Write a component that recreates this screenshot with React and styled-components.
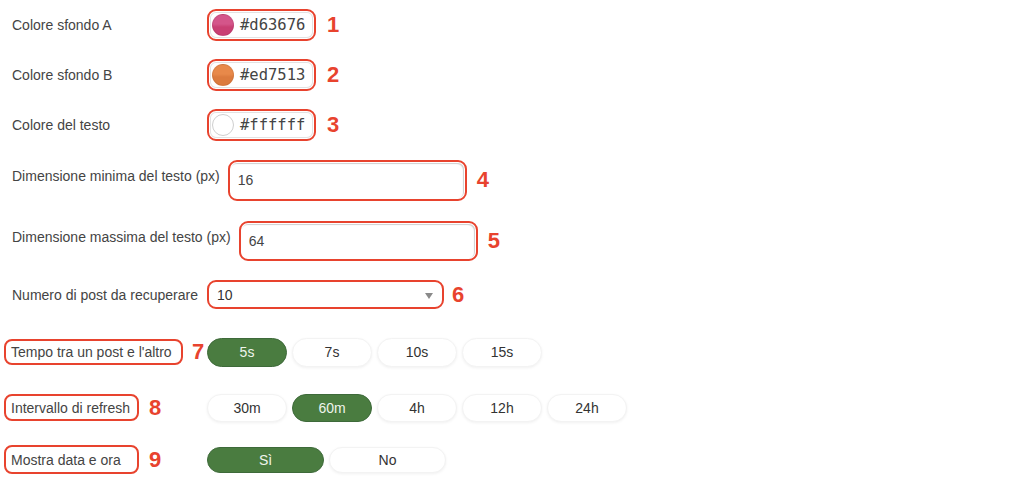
import React from "react";
import styled, { createGlobalStyle } from "styled-components";

const GlobalStyle = createGlobalStyle`
  body {
    margin: 0;
    background: #ffffff;
    font-family: "Liberation Sans", Arial, sans-serif;
  }
`;

const RED = "#e8432e";
const GREEN = "#4a7c40";

const Page = styled.div`
  width: 1024px;
  display: flex;
  flex-direction: column;
  padding-left: 12px;
  box-sizing: border-box;
`;

const Row = styled.div`
  height: ${(p) => p.$h}px;
  display: flex;
  align-items: center;
`;

const Label = styled.div`
  min-width: 187px;
  margin-right: 8px;
  font-size: 14px;
  color: #444;
  white-space: nowrap;
  margin-bottom: ${(p) => p.$raise || 0}px;
`;

const LabelCell = styled.div`
  width: 203px;
  margin-left: -8px;
  display: flex;
  align-items: center;
`;

const MarkedLabel = styled.div`
  width: ${(p) => p.$w}px;
  height: ${(p) => p.$hh}px;
  box-sizing: border-box;
  border: 2px solid ${RED};
  border-radius: 8px;
  padding-left: 5px;
  display: flex;
  align-items: center;
  font-size: 14px;
  color: #444;
  white-space: nowrap;
`;

const Num = styled.span`
  font-family: "Liberation Sans", Arial, sans-serif;
  font-weight: 700;
  font-size: 22px;
  color: ${RED};
  margin-left: ${(p) => p.$ml ?? 10}px;
  line-height: 1;
`;

const Marker = styled.div`
  width: ${(p) => p.$w}px;
  height: ${(p) => p.$hh}px;
  box-sizing: border-box;
  border: 2px solid ${RED};
  border-radius: 9px;
  padding: 1px;
  display: flex;
`;

const ColorField = styled.div`
  flex: 1;
  display: flex;
  align-items: center;
  gap: 6px;
  padding-left: 2px;
  border-radius: 6px;
  box-shadow: inset 0 0 0 1px #e2e2e2;
`;

const Swatch = styled.div`
  width: 22px;
  height: 22px;
  border-radius: 50%;
  box-sizing: border-box;
  background: ${(p) =>
    p.$light
      ? "#ffffff"
      : `linear-gradient(180deg, ${p.$top} 0%, ${p.$top} 45%, ${p.$bottom} 60%, ${p.$bottom} 100%)`};
  border: 1px solid ${(p) => (p.$light ? "#cfcfcf" : "rgba(0,0,0,0.06)")};
`;

const Hex = styled.span`
  font-family: "DejaVu Sans Mono", "Liberation Mono", monospace;
  font-size: 15.5px;
  color: #444;
`;

const TextField = styled.div`
  flex: 1;
  display: flex;
  align-items: center;
  padding-left: 7px;
  font-size: 14px;
  color: #444;
  border-radius: 6px;
  box-shadow: inset -1px 1px 1px #d0d0d0;
`;

const SelectField = styled.div`
  flex: 1;
  display: flex;
  align-items: center;
  justify-content: space-between;
  padding: 0 8px 0 7px;
  font-size: 14px;
  color: #333;
`;

const Caret = styled.span`
  width: 0;
  height: 0;
  border-left: 4px solid transparent;
  border-right: 4px solid transparent;
  border-top: 6px solid #8a8a8a;
  margin-top: 2px;
`;

const Pills = styled.div`
  display: flex;
  gap: 5px;
`;

const Pill = styled.div`
  width: ${(p) => p.$w}px;
  height: ${(p) => p.$hh}px;
  border-radius: ${(p) => p.$hh / 2}px;
  display: flex;
  align-items: center;
  justify-content: center;
  font-size: 14px;
  box-sizing: border-box;
  color: ${(p) => (p.$on ? "#eef4ec" : "#333")};
  background: ${(p) => (p.$on ? GREEN : "#ffffff")};
  border: 1px solid ${(p) => (p.$on ? "#3e6a3a" : "#f3f3f3")};
  box-shadow: ${(p) => (p.$on ? "none" : "0 1px 3px rgba(0,0,0,0.06)")};
`;

const colors = [
  { label: "Colore sfondo A", hex: "#d63676", top: "#d4558a", bottom: "#c93f73", n: 1, h: 49 },
  { label: "Colore sfondo B", hex: "#ed7513", top: "#e8894a", bottom: "#dc7b3e", n: 2, h: 51 },
  { label: "Colore del testo", hex: "#ffffff", light: true, n: 3, h: 50 },
];

const groups = [
  { label: "Tempo tra un post e l'altro", n: 7, w: 179, lh: 26, h: 68, pw: 80, ph: 29, opts: ["5s", "7s", "10s", "15s"], on: 0, ml: 9 },
  { label: "Intervallo di refresh", n: 8, w: 135, lh: 27, h: 43, pw: 80, ph: 28, opts: ["30m", "60m", "4h", "12h", "24h"], on: 1, ml: 10 },
  { label: "Mostra data e ora", n: 9, w: 135, lh: 29, h: 61, pw: 117, ph: 26, opts: ["Sì", "No"], on: 0, ml: 10 },
];

export default function App() {
  return (
    <>
      <GlobalStyle />
      <Page>
        {colors.map((c) => (
          <Row key={c.n} $h={c.h}>
            <Label>{c.label}</Label>
            <Marker $w={109} $hh={32}>
              <ColorField>
                <Swatch $light={c.light} $top={c.top} $bottom={c.bottom} />
                <Hex>{c.hex}</Hex>
              </ColorField>
            </Marker>
            <Num $ml={11}>{c.n}</Num>
          </Row>
        ))}

        <Row $h={60}>
          <Label $raise={8}>Dimensione minima del testo (px)</Label>
          <Marker $w={239} $hh={41}>
            <TextField>16</TextField>
          </Marker>
          <Num $ml={10}>4</Num>
        </Row>

        <Row $h={61}>
          <Label $raise={7}>Dimensione massima del testo (px)</Label>
          <Marker $w={239} $hh={40}>
            <TextField>64</TextField>
          </Marker>
          <Num $ml={10}>5</Num>
        </Row>

        <Row $h={47}>
          <Label>Numero di post da recuperare</Label>
          <Marker $w={237} $hh={29}>
            <SelectField>
              10
              <Caret />
            </SelectField>
          </Marker>
          <Num $ml={8}>6</Num>
        </Row>

        {groups.map((g) => (
          <Row key={g.n} $h={g.h}>
            <LabelCell>
              <MarkedLabel $w={g.w} $hh={g.lh}>
                {g.label}
              </MarkedLabel>
              <Num $ml={g.ml}>{g.n}</Num>
            </LabelCell>
            <Pills>
              {g.opts.map((o, i) => (
                <Pill key={o} $w={g.pw} $hh={g.ph} $on={i === g.on}>
                  {o}
                </Pill>
              ))}
            </Pills>
          </Row>
        ))}
      </Page>
    </>
  );
}
